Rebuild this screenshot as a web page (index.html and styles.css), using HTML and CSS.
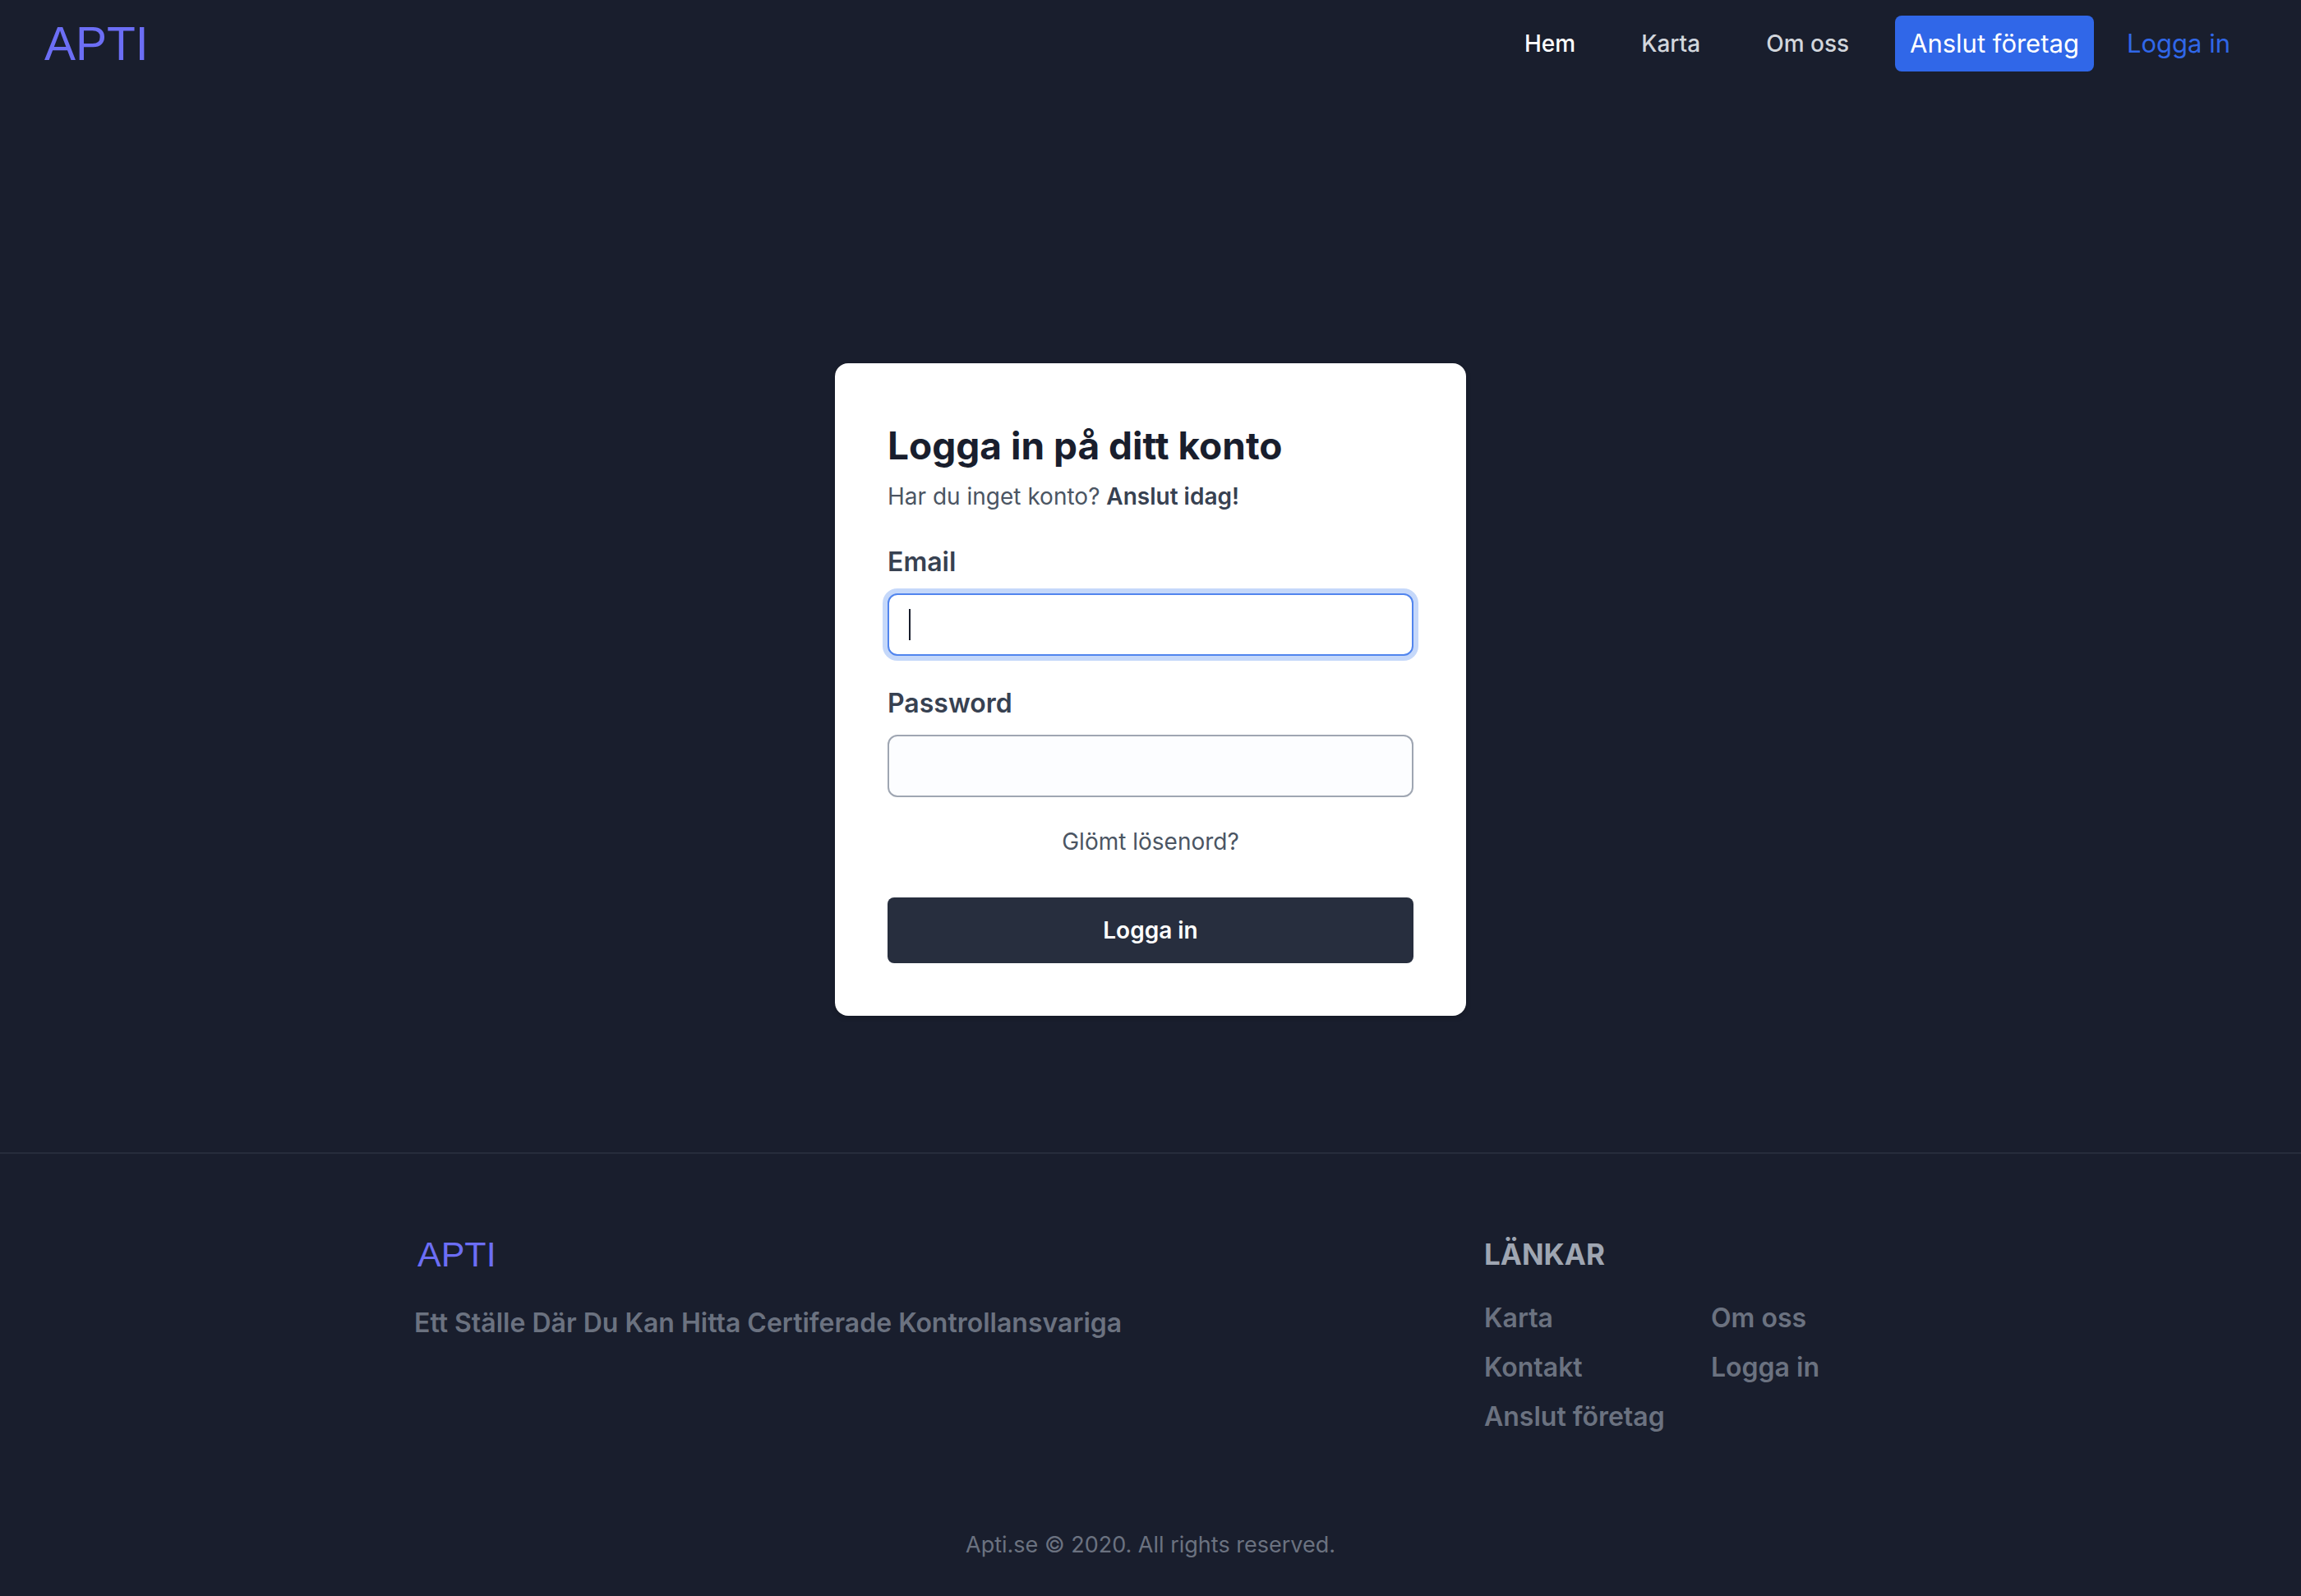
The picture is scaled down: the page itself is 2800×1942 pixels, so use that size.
FILE: index.html
```html
<!DOCTYPE html>
<html lang="sv">
<head>
<meta charset="utf-8">
<meta name="viewport" content="width=device-width, initial-scale=1">
<title>Logga in – APTI</title>
<link rel="stylesheet" href="styles.css">
</head>
<body>
<header class="header">
  <a class="logo" href="#">APTI</a>
  <nav class="nav">
    <a class="nav-link nav-link-active" href="#">Hem</a>
    <a class="nav-link" href="#">Karta</a>
    <a class="nav-link" href="#">Om oss</a>
    <a class="nav-join" href="#">Anslut företag</a>
    <a class="nav-login" href="#">Logga in</a>
  </nav>
</header>
<main class="main">
  <form class="card">
    <h1 class="title">Logga in på ditt konto</h1>
    <p class="intro">Har du inget konto? <a class="intro-link" href="#">Anslut idag!</a></p>
    <label class="label" for="email">Email</label>
    <div class="field">
      <input class="input input-focus" id="email" type="email">
      <span class="caret"></span>
    </div>
    <label class="label" for="password">Password</label>
    <div class="field">
      <input class="input" id="password" type="password">
    </div>
    <a class="forgot" href="#">Glömt lösenord?</a>
    <button class="submit" type="submit">Logga in</button>
  </form>
</main>
<footer class="footer">
  <div class="footer-columns">
    <section class="about">
      <a class="logo logo-small" href="#">APTI</a>
      <p class="tagline">Ett Ställe Där Du Kan Hitta Certiferade Kontrollansvariga</p>
    </section>
    <section class="links">
      <h2 class="links-title">LÄNKAR</h2>
      <ul class="links-list">
        <li><a href="#">Karta</a></li>
        <li><a href="#">Om oss</a></li>
        <li><a href="#">Kontakt</a></li>
        <li><a href="#">Logga in</a></li>
        <li><a href="#">Anslut företag</a></li>
      </ul>
    </section>
  </div>
  <p class="copyright">Apti.se © 2020. All rights reserved.</p>
</footer>
</body>
</html>
```
FILE: styles.css
```css
* {
  box-sizing: border-box;
}

body {
  display: flex;
  flex-direction: column;
  min-height: 100vh;
  margin: 0;
  background: #191e2d;
  color: #191e2d;
  font-family: Inter, "Liberation Sans", sans-serif;
  font-size: 28px;
  line-height: 40px;
}

h1,
h2,
p,
ul {
  margin: 0;
  padding: 0;
}

a {
  color: inherit;
  text-decoration: none;
}

.header {
  display: flex;
  align-items: center;
  justify-content: space-between;
  height: 106px;
  padding: 0 86px 0 54px;
}

.logo {
  color: #6c6ef5;
  font-family: "Liberation Sans", Arial, sans-serif;
  font-size: 57px;
  line-height: 64px;
}

.nav {
  display: flex;
  align-items: center;
}

.nav-link {
  margin-right: 80px;
  color: #d2d6dc;
  font-weight: 500;
}

.nav-link-active {
  color: #fff;
}

.nav-join {
  margin-left: -24px;
  padding: 14px 18px;
  border-radius: 8px;
  background: #3067e8;
  color: #fff;
  font-size: 31px;
}

.nav-login {
  padding: 0 0 0 40px;
  color: #3067e8;
  font-size: 31px;
}

.main {
  display: flex;
  flex: 1;
  align-items: flex-start;
  justify-content: center;
  padding: 336px 32px 166px;
}

.card {
  display: flex;
  flex-direction: column;
  width: 100%;
  max-width: 768px;
  padding: 64px;
  border-radius: 16px;
  background: #fff;
  box-shadow: 0 2px 6px rgba(0, 0, 0, 0.2);
}

.title {
  padding-top: 6px;
  font-size: 46px;
  font-weight: 700;
  line-height: 60px;
}

.intro {
  padding: 12px 0 2px;
  color: #4b5563;
}

.intro-link {
  color: #374151;
  font-weight: 600;
}

.label {
  padding: 36px 0 16px;
  color: #374151;
  font-size: 32px;
  font-weight: 600;
  line-height: 44px;
}

.field {
  position: relative;
  display: flex;
}

.input {
  flex: 1;
  min-width: 0;
  height: 76px;
  padding: 0 24px;
  border: 2px solid #9fa6b2;
  border-radius: 12px;
  outline: 0;
  background: #fcfdff;
  color: #191e2d;
  font: inherit;
}

.input-focus {
  border-color: #5185ee;
  background: #fff;
  box-shadow: 0 0 0 6px #c5d8fa;
}

.caret {
  position: absolute;
  top: 19px;
  left: 26px;
  width: 2px;
  height: 38px;
  background: #191e2d;
}

.forgot {
  margin: 34px 0 48px;
  color: #4b5563;
  text-align: center;
}

.submit {
  height: 80px;
  padding: 0;
  border: 0;
  border-radius: 8px;
  background: #272e3e;
  color: #fff;
  font: inherit;
  font-weight: 600;
}

.footer {
  padding: 94px 32px 42px;
  border-top: 2px solid #262d3c;
  color: #6b7280;
}

.footer-columns {
  display: flex;
  justify-content: space-between;
  width: 100%;
  max-width: 1792px;
  margin: 0 auto;
  font-size: 32px;
  font-weight: 600;
}

.logo-small {
  display: block;
  margin: 0 4px 36px;
  font-size: 43px;
  font-weight: 400;
  line-height: 56px;
}

.links {
  width: 490px;
}

.links-title {
  padding-bottom: 20px;
  color: #9fa6b2;
  font-size: 35px;
  font-weight: 700;
  line-height: 56px;
}

.links-list {
  display: grid;
  grid-template-columns: 276px 1fr;
  line-height: 60px;
  list-style: none;
}

.copyright {
  padding-top: 106px;
  font-size: 27px;
  text-align: center;
}
```
